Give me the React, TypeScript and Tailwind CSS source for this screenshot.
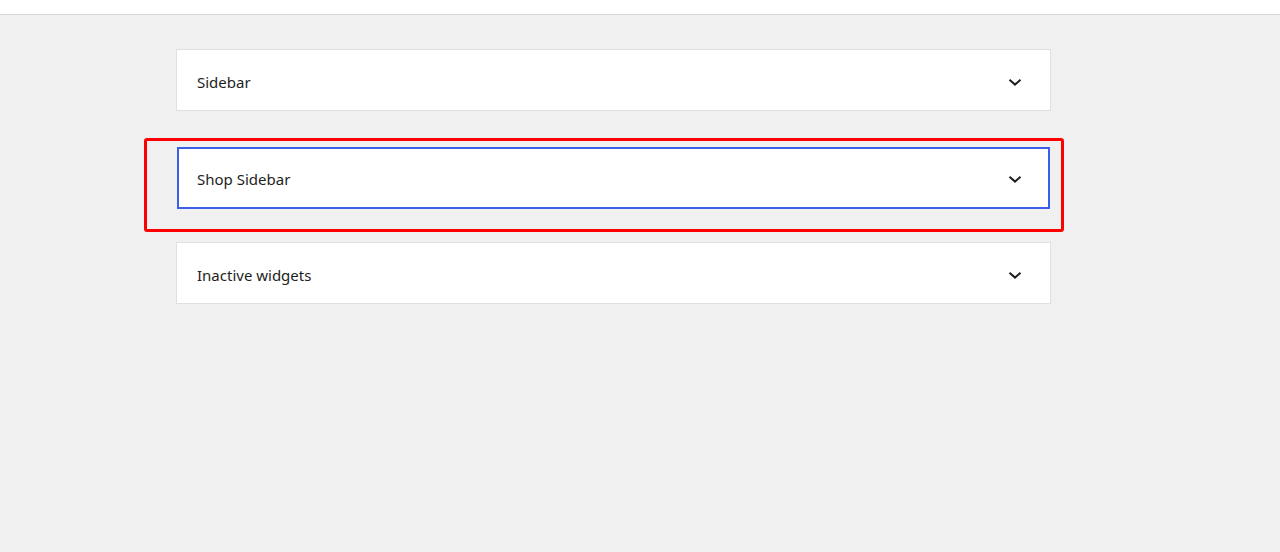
const areas = [
    { id: "sidebar", title: "Sidebar", focused: false, gap: "" },
    { id: "shop-sidebar", title: "Shop Sidebar", focused: true, gap: "mt-[36px]" },
    { id: "inactive", title: "Inactive widgets", focused: false, gap: "mt-[33px]" },
];

function Chevron() {
    return (
        <svg width="24" height="24" viewBox="0 0 24 24" fill="none" className="text-[#1e1e1e]">
            <path d="M6.5 9.8 12 14.6l5.5-4.8" stroke="currentColor" strokeWidth="2" />
        </svg>
    );
}

function WidgetArea({ title, focused, gap }: { title: string; focused: boolean; gap: string }) {
    return (
        <div
            className={`${gap} flex h-[62px] items-center justify-between bg-white ${
                focused
                    ? "mx-[1px] border-2 border-[#3c5ee8] pt-[2px] pl-[18px] pr-[21px]"
                    : "border border-[#e0e0e0] pt-1 pl-5 pr-[23px]"
            }`}
        >
            <span className="text-[15px] text-[#1e1e1e]">{title}</span>
            <Chevron />
        </div>
    );
}

export default function App() {
    return (
        <div className="min-h-[552px] bg-[#f0f0f0] font-['Segoe_UI','Noto_Sans',sans-serif]">
            <div className="h-[15px] border-b border-[#d6d6d6] bg-white" />
            <div className="relative ml-[176px] flex w-[875px] flex-col pt-[34px]">
                {areas.map((a) => (
                    <WidgetArea key={a.id} title={a.title} focused={a.focused} gap={a.gap} />
                ))}
                {/* annotation box around the focused area */}
                <div className="pointer-events-none absolute left-[-32px] top-[123px] h-[94px] w-[920px] rounded-[3px] border-[3px] border-[#ff0000]" />
            </div>
        </div>
    );
}
